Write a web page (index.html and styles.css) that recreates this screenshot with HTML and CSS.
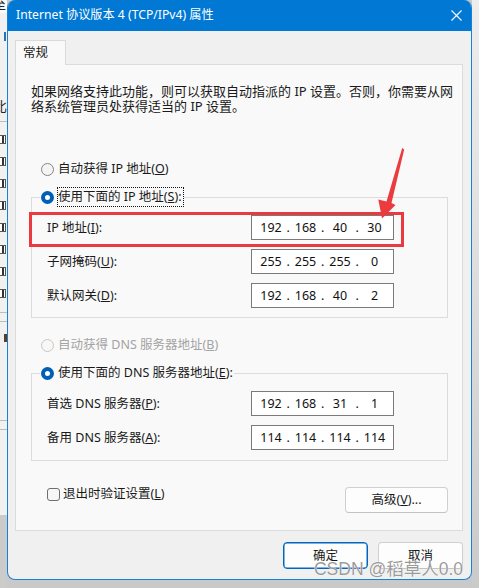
FILE: index.html
```html
<!DOCTYPE html>
<html lang="zh-CN">
<head>
<meta charset="utf-8">
<title>Internet 协议版本 4 (TCP/IPv4) 属性</title>
<link rel="stylesheet" href="styles.css">
</head>
<body>
<div class="screen">
  <div class="bg-left">
    <div class="frag-top"><span>至</span></div>
    <div class="frag-tick"></div>
    <div class="frag-char"><span>比</span></div>
    <div class="frag-line"></div>
    <div class="frag-box"></div>
    <div class="frag-box"></div>
    <div class="frag-box"></div>
    <div class="frag-box"></div>
    <div class="frag-box"></div>
    <div class="frag-box"></div>
    <div class="frag-box"></div>
    <div class="frag-box"></div>
    <div class="frag-line low"></div>
    <div class="frag-line"></div>
    <div class="frag-mark"></div>
    <div class="frag-line lower"></div>
    <div class="frag-line"></div>
  </div>

  <div class="window">
    <div class="titlebar">
      <span class="title">Internet 协议版本 4 (TCP/IPv4) 属性</span>
      <svg class="close" width="11" height="11" viewBox="0 0 11 11"><path d="M0.5 0.5L10.5 10.5M10.5 0.5L0.5 10.5" stroke="#fff" stroke-width="1.1" fill="none"/></svg>
    </div>
    <div class="client">
      <div class="tabs"><div class="tab">常规</div></div>
      <div class="panel">
        <p class="intro">如果网络支持此功能，则可以获取自动指派的 IP 设置。否则，你需要从网<br>络系统管理员处获得适当的 IP 设置。</p>

        <div class="radio-row first"><span class="radio"></span><span class="rlabel">自动获得 IP 地址(<u>O</u>)</span></div>
        <fieldset class="group">
          <legend class="radio-row"><span class="radio on"></span><span class="rlabel focus">使用下面的 IP 地址(<u>S</u>):</span></legend>
          <div class="fields">
            <span class="flabel">IP 地址(<u>I</u>):</span>
            <div class="ip"><span>192</span><i>.</i><span>168</span><i>.</i><span>40</span><i>.</i><span>30</span></div>
            <span class="flabel">子网掩码(<u>U</u>):</span>
            <div class="ip"><span>255</span><i>.</i><span>255</span><i>.</i><span>255</span><i>.</i><span>0</span></div>
            <span class="flabel">默认网关(<u>D</u>):</span>
            <div class="ip"><span>192</span><i>.</i><span>168</span><i>.</i><span>40</span><i>.</i><span>2</span></div>
          </div>
        </fieldset>

        <div class="radio-row second disabled"><span class="radio"></span><span class="rlabel">自动获得 DNS 服务器地址(<u>B</u>)</span></div>
        <fieldset class="group">
          <legend class="radio-row"><span class="radio on"></span><span class="rlabel">使用下面的 DNS 服务器地址(<u>E</u>):</span></legend>
          <div class="fields dns">
            <span class="flabel">首选 DNS 服务器(<u>P</u>):</span>
            <div class="ip"><span>192</span><i>.</i><span>168</span><i>.</i><span>31</span><i>.</i><span>1</span></div>
            <span class="flabel">备用 DNS 服务器(<u>A</u>):</span>
            <div class="ip"><span>114</span><i>.</i><span>114</span><i>.</i><span>114</span><i>.</i><span>114</span></div>
          </div>
        </fieldset>

        <div class="bottom-row">
          <div class="check-row"><span class="checkbox"></span><span>退出时验证设置(<u>L</u>)</span></div>
          <button class="btn adv">高级(<u>V</u>)...</button>
        </div>
      </div>
      <div class="buttons">
        <button class="btn primary">确定</button>
        <button class="btn">取消</button>
      </div>
    </div>
  </div>

  <div class="bg-right"></div>
</div>

<div class="annot-box"></div>
<svg class="annot-arrow" width="479" height="588" viewBox="0 0 479 588">
  <polygon points="402.2,148 404.2,149.5 391.5,203 395.5,205 382,218.5 378.3,199.5 386.5,201.5" fill="#ec3b3f"/>
</svg>
<div class="watermark">CSDN @稻草人0.0</div>
</body>
</html>
```

FILE: styles.css
```css
* { box-sizing: border-box; }
html, body { margin: 0; padding: 0; }
body {
  width: 479px;
  height: 588px;
  overflow: hidden;
  position: relative;
  background: #c9c9c9;
  font-family: "Noto Sans", "Noto Sans CJK SC", sans-serif;
  font-size: 12.5px;
  color: #1a1a1a;
}
u { text-decoration: underline; text-underline-offset: 1px; }

.screen { display: flex; height: 588px; }

/* background application fragments */
.bg-left {
  width: 7px;
  flex: none;
  display: flex;
  flex-direction: column;
  overflow: hidden;
  background: linear-gradient(#f1f1f1 0 515px, #cbcbcb 515px);
}
.frag-top { height: 13px; background: #fbfbfb; overflow: hidden; line-height: 12px; font-size: 13px; color: #222; }
.frag-top span { display: block; margin-left: -7px; margin-top: -2px; }
.frag-tick { width: 2px; height: 9px; background: #2f6fb0; margin: 19px 0 0 4px; }
.frag-char { height: 14px; margin-top: 58px; overflow: hidden; font-size: 13px; line-height: 14px; color: #222; }
.frag-char span { display: block; margin-left: -6px; }
.frag-line { height: 1px; background: #bdbdbd; margin-top: 8px; }
.frag-line.low { margin-top: 14px; }
.frag-line.lower { margin-top: 78px; }
.frag-box {
  width: 6px; height: 9px;
  margin-top: 13px;
  border: 1px solid #555;
  border-left: 0;
  background: linear-gradient(to right, #fff 0 2px, #333 2px 4px, #fff 4px);
}
.frag-box:first-of-type { margin-top: 6px; }
.frag-mark { width: 3px; height: 8px; background: #5a4020; margin: 12px 0 0 4px; }

.bg-right {
  flex: 1;
  background: linear-gradient(#ededed 0, #e2e2e2 200px, #cacaca 588px);
}

/* window */
.window {
  width: 465px;
  height: 580px;
  flex: none;
  display: flex;
  flex-direction: column;
  border: 1px solid #1a7fd8;
  border-top: 0;
  border-radius: 8px;
  overflow: hidden;
  background: #f0f0f0;
}
.titlebar {
  height: 31px;
  flex: none;
  display: flex;
  align-items: center;
  justify-content: space-between;
  padding: 0 9px 0 8px;
  background: #0078d4;
  color: #fff;
  font-size: 12.2px;
}
.title { line-height: 16px; margin-top: -1px; }
.close { display: block; margin-top: -1px; }

.client {
  flex: 1;
  display: flex;
  flex-direction: column;
  padding: 9px 8px 10px 7px;
}
.tabs { display: flex; height: 24px; }
.tab {
  position: relative;
  z-index: 1;
  width: 51px;
  height: 25px;
  padding-left: 7px;
  line-height: 24px;
  background: #f9f9f9;
  border: 1px solid #dadada;
  border-bottom: 0;
}
.panel {
  height: 467px;
  flex: none;
  display: flex;
  flex-direction: column;
  background: #f9f9f9;
  border: 1px solid #dcdcdc;
}
.intro {
  margin: 0;
  padding: 19px 0 0 15px;
  height: 48px;
  font-size: 13px;
  line-height: 15px;
  white-space: nowrap;
}

.radio-row {
  display: flex;
  align-items: center;
  height: 18px;
  line-height: 18px;
}
.radio-row.first { margin: 47px 0 0 25px; }
.radio-row.second { margin: 18px 0 0 25px; }
.radio {
  width: 13px;
  height: 13px;
  flex: none;
  border-radius: 50%;
  border: 1px solid #858585;
  background: #f4f4f4;
  margin-right: 4px;
}
.radio.on {
  border: 4px solid #005fb8;
  background: #fff;
}
.disabled { color: #a3a3a3; }
.disabled .radio { border-color: #c6c6c6; background: #f7f7f7; }
.rlabel.focus { outline: 1px dotted #111; outline-offset: 0; padding-right: 1px; }

.group {
  margin: 10px 14px 0 15px;
  padding: 0;
  border: 1px solid #dcdcdc;
  min-width: 0;
}
.group legend {
  padding: 0 1px;
  margin-left: 8px;
}
.fields {
  display: grid;
  grid-template-columns: 204px 143px;
  row-gap: 9px;
  align-items: center;
  padding: 9px 0 9px 15px;
}
.fields.dns { padding-bottom: 10px; }
.flabel { line-height: 18px; }
.ip {
  display: flex;
  align-items: center;
  height: 25px;
  padding-left: 6px;
  background: #fff;
  border: 1px solid #7a7a7a;
  line-height: 18px;
  color: #111;
}
.ip span { width: 26px; text-align: center; }
.ip i { font-style: normal; width: 8.5px; text-align: center; }

.bottom-row {
  display: flex;
  justify-content: space-between;
  align-items: flex-start;
  margin: 24px 14px 0 31px;
  height: 28px;
}
.check-row { display: flex; align-items: center; height: 18px; line-height: 18px; }
.checkbox {
  width: 13px;
  height: 13px;
  border: 1px solid #6f6f6f;
  border-radius: 3px;
  background: #f6f6f6;
  margin-right: 3px;
}

.btn {
  font: inherit;
  color: #1a1a1a;
  background: #fdfdfd;
  border: 1px solid #d0d0d0;
  border-bottom-color: #c2c2c2;
  border-radius: 4px;
  padding: 0;
  line-height: 18px;
}
.adv { width: 103px; height: 26px; margin-top: 2px; }
.buttons {
  display: flex;
  justify-content: flex-end;
  gap: 10px;
  margin-top: 11px;
}
.buttons .btn { width: 85px; height: 27px; }
.btn.primary { border: 1px solid #0067c0; box-shadow: inset 0 0 0 0.5px #0067c0; background: #fdfdfd; }

/* annotation overlays */
.annot-box {
  position: absolute;
  left: 29px;
  top: 212px;
  width: 375px;
  height: 35px;
  border: 3px solid #ea3a3f;
}
.annot-arrow { position: absolute; left: 0; top: 0; pointer-events: none; }
.watermark {
  position: absolute;
  right: 16px;
  top: 558px;
  font-family: "Liberation Sans", "Noto Sans CJK SC", sans-serif;
  font-size: 17.5px;
  line-height: 22px;
  color: rgba(115, 115, 115, 0.72);
  text-shadow: 0 0 1px #fff, 0 0 1px #fff;
  white-space: nowrap;
}
```
